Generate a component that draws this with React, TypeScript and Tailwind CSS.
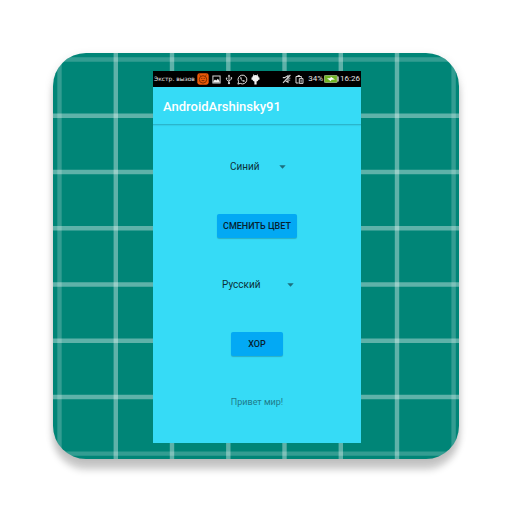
import React, { useState } from "react";

const GRID = [59.5, 115.8, 172, 228.3, 284.5, 340.8, 397, 453.6].map((n) => n - 53);

function GridBackdrop() {
  return (
    <svg className="absolute inset-0 h-full w-full" viewBox="0 0 406 406" preserveAspectRatio="none" aria-hidden="true">
      {GRID.map((p, i) => {
        const edge = i === 0 || i === GRID.length - 1;
        return (
          <g key={p} stroke="#ffffff" strokeOpacity={edge ? 0.2 : 0.37} strokeWidth="4.4">
            <line x1={p} x2={p} y1="0" y2="406" />
            <line y1={p} y2={p} x1="0" x2="406" />
          </g>
        );
      })}
    </svg>
  );
}

function StatusBar() {
  return (
    <div className="flex h-4 items-center bg-black pl-px pr-px text-[#d6d6d6]">
      <span className="w-[43px] whitespace-nowrap font-['DejaVu_Sans',sans-serif] text-[6px] leading-4 text-[#e6e6e6]">Экстр. вызов</span>
      <svg className="h-3 w-3" viewBox="0 0 12 12" fill="none" aria-hidden="true">
        <rect x="0.3" y="0.3" width="11.4" height="11.4" rx="2.4" fill="#ec5a08" />
        <circle cx="6" cy="6.4" r="3.7" stroke="#7a2c00" strokeWidth="1" />
        <path d="M3.6 2.8 2.4 1.8M8.4 2.8l1.2-1" stroke="#7a2c00" strokeWidth="1" />
        <path d="M4.2 5.4h1.2M6.6 5.4h1.2M4.6 7.6h2.8" stroke="#7a2c00" strokeWidth="1" />
      </svg>
      <svg className="ml-[3px] h-[9px] w-[9px]" viewBox="0 0 9 9" aria-hidden="true">
        <path fillRule="evenodd" fill="#d6d6d6" d="M.4.6h8.2v7.8H.4zM1.4 1.6v5.8h6.2V1.6z" />
        <path fill="#f0f0f0" d="M1.4 7.4V6l1.6-1.4 1.2.9 1.7-1.7 1.7 2.4v1.2z" />
      </svg>
      <svg className="ml-1 h-[11px] w-2" viewBox="0 0 8 11" fill="none" stroke="#d6d6d6" aria-hidden="true">
        <path d="M4 1.4v7.8M1.6 4.2v1.6L4 7.6M6.4 3.8v1.5L4 6.8" strokeWidth=".9" />
        <path d="M4 .6 5.3 2.5H2.7z" fill="#d6d6d6" stroke="none" />
        <circle cx="4" cy="9.2" r="1.1" fill="#d6d6d6" stroke="none" />
        <circle cx="1.6" cy="4.2" r=".8" fill="#d6d6d6" stroke="none" />
        <path d="M5.7 3.2h1.4v1.4H5.7z" fill="#d6d6d6" stroke="none" />
      </svg>
      <svg className="ml-1 h-[11px] w-[11px]" viewBox="0 0 11 11" fill="none" aria-hidden="true">
        <path d="M.9 10.1 1.6 7.7A4.4 4.4 0 1 1 3.3 9.4z" stroke="#e0e0e0" strokeWidth="1" />
        <path d="M3.7 3.1c-.9.8-.3 2.3.9 3.4 1.2 1.2 2.6 1.7 3.3.8l-.1-.6-1.3-.6-.6.6c-.7-.3-1.3-.9-1.6-1.6l.5-.6-.5-1.3z" fill="#e0e0e0" />
      </svg>
      <svg className="ml-[3px] h-[11px] w-[9px]" viewBox="0 0 9 11" aria-hidden="true">
        <path
          fill="#f0f0f0"
          d="M1.9.6 2.4.3l.7.9a4 4 0 0 1 2.8 0l.7-.9.5.3-.5.9A3 3 0 0 1 7.7 3.4h.8v2.4h-1A2.6 2.6 0 0 1 5.6 7.6v2.9H3.4V7.6A2.6 2.6 0 0 1 1.5 5.8h-1V3.4h.8A3 3 0 0 1 2.4 1.5z"
        />
      </svg>
      <svg className="ml-auto h-[10px] w-[9px]" viewBox="0 0 9 10" fill="none" stroke="#d6d6d6" aria-hidden="true">
        <path d="M.8 3.6h1.8L6 1.6v6.6L3.6 6.8" strokeWidth="1.1" />
        <path d="M8.4 1 1 8.8" strokeWidth="1.1" />
        <path d="M7 4.2h1.4M6.8 6.2h1.4" strokeWidth=".8" />
      </svg>
      <svg className="ml-1 h-[9px] w-[9px]" viewBox="0 0 9 9" fill="none" stroke="#d6d6d6" aria-hidden="true">
        <path d="M3.6 8H1V1.5h5.4v1.4" strokeWidth="1" />
        <path d="M2.6.7h2.2" strokeWidth="1.2" />
        <path d="M4.3 3.6H8v4.8H4.3z" strokeWidth="1" />
        <path d="M6.1 4.6v3" strokeWidth=".9" />
      </svg>
      <span className="ml-1 text-[8px] leading-4 text-[#e6e6e6]">34%</span>
      <svg className="ml-px h-2 w-[15px]" viewBox="0 0 15 8" aria-hidden="true">
        <rect x=".4" y=".4" width="12.8" height="7.2" rx=".8" fill="#6fb324" stroke="#a9c98a" strokeWidth=".8" />
        <path d="M13.4 1.4h1.3v5.2h-1.3z" fill="#d6d6d6" />
        <path d="m3 3.3 3.4-.1.4-1.4L11 4.5l-3.6.2-.6 1.5z" fill="#fff" />
      </svg>
      <span className="ml-px text-[8px] leading-4 text-[#e6e6e6]">16:26</span>
    </div>
  );
}

function Spinner(props: {
  label: string;
  width: string;
  options: string[];
  value: string;
  onChange: (v: string) => void;
}) {
  return (
    <div className={"grid h-6 items-center " + props.width}>
      <select
        aria-label={props.label}
        value={props.value}
        onChange={(e) => props.onChange(e.target.value)}
        className="col-start-1 row-start-1 h-6 w-full appearance-none bg-transparent pl-[2px] text-[10px] leading-6 text-[#0c3038] outline-none"
      >
        {props.options.map((o) => (
          <option key={o}>{o}</option>
        ))}
      </select>
      <svg className="pointer-events-none col-start-1 row-start-1 h-1 w-[7px] justify-self-end" viewBox="0 0 7 4" aria-hidden="true">
        <path d="M.3.2h6.4L3.5 3.8z" fill="#1c6f7e" />
      </svg>
    </div>
  );
}

const raised =
  "h-6 rounded-[2px] bg-[#03a9f4] text-[9px] font-medium leading-6 text-[#06222f] shadow-[0_1px_1px_rgba(0,0,0,0.2)]";

export default function App() {
  const [color, setColor] = useState("Синий");
  const [lang, setLang] = useState("Русский");

  return (
    <main className="grid min-h-screen place-items-center bg-white font-['Roboto','Noto_Sans',sans-serif]">
      <div className="relative flex w-[calc(100%-106px)] justify-center rounded-[33px] bg-[#008577] pt-[18px] pb-4 pl-[2px] shadow-[0_11px_7px_rgba(0,0,0,0.18),0_3px_10px_rgba(0,0,0,0.13)]">
        <div className="absolute inset-0 overflow-hidden rounded-[33px]">
          <GridBackdrop />
        </div>
        <section className="relative w-[208px] bg-[#36dbf6]">
          <StatusBar />
          <header className="flex h-[38px] items-center border-b border-[#2bb5cc] px-[10px] pt-[2px] shadow-[0_1px_1px_rgba(0,0,0,0.06)]">
            <h1 className="text-[13px] font-medium leading-4 text-white">AndroidArshinsky91</h1>
          </header>
          <div className="flex flex-col items-center gap-[35px] pt-[30px] pb-[30px]">
            <Spinner label="Цвет" width="w-[58px]" options={["Синий"]} value={color} onChange={setColor} />
            <button type="button" className={raised + " w-20 whitespace-nowrap"}>СМЕНИТЬ ЦВЕТ</button>
            <Spinner label="Язык" width="w-[74px]" options={["Русский"]} value={lang} onChange={setLang} />
            <button type="button" className={raised + " w-[52px]"}>ХОР</button>
            <p className="text-[9px] leading-[22px] text-[#1f7c8b]">Привет мир!</p>
          </div>
        </section>
      </div>
    </main>
  );
}
